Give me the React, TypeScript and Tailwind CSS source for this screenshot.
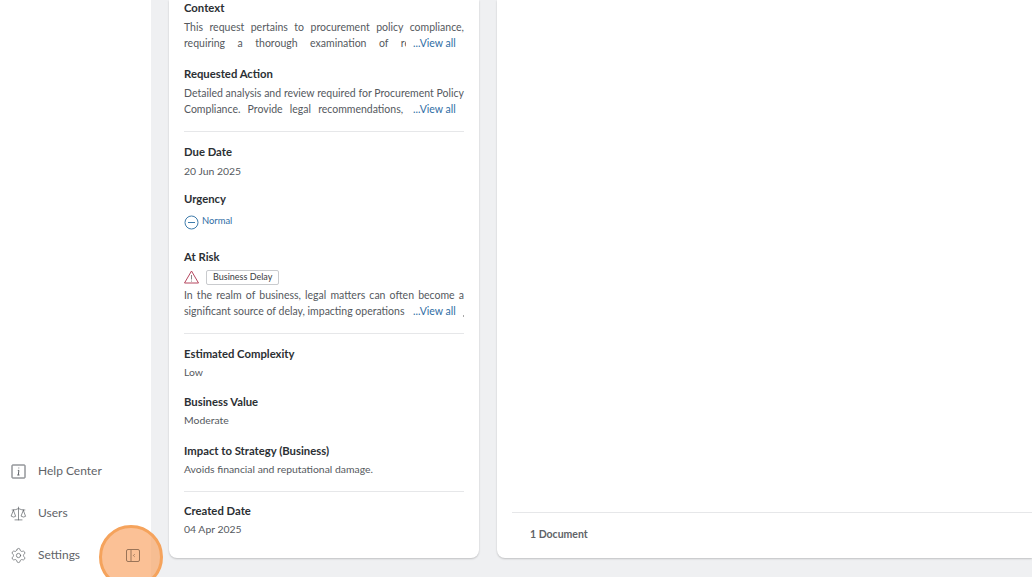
import { Settings, Scale } from "lucide-react";

const lato = "font-['Lato','Open_Sans',sans-serif]";

function Heading({ children }: { children: string }) {
  return <div className="text-[11.3px] leading-[16px] font-bold text-[#2b2f33]">{children}</div>;
}

function Value({ children }: { children: string }) {
  return <div className="text-[10.4px] leading-[16px] text-[#55595e]">{children}</div>;
}

function Clamped({ first, second, peek }: { first: string; second: string; peek?: boolean }) {
  return (
    <div className="text-[10.5px] leading-[16px] text-[#55595e]">
      <div className="[text-align-last:justify]">{first}</div>
      <div className="flex">
        {/* second line keeps its full justified width but is cut before the link */}
        <div className="w-[222px] shrink-0 overflow-hidden">
          <div className="w-[280px] whitespace-nowrap [text-align-last:justify]">{second}</div>
        </div>
        <span className="ml-[7px] text-[#2f6ea5]">...View all</span>
        {peek ? <span className="ml-auto mt-[12px] h-[2px] w-px bg-[#a9a9a9]" /> : null}
      </div>
    </div>
  );
}

function Divider() {
  return <div className="h-px bg-[#e6e7e9]" />;
}

function NavItem({ icon, label }: { icon: React.ReactNode; label: string }) {
  return (
    <div className="flex h-[42px] items-center gap-[11px] pl-[10px] text-[12px] text-[#5f6368]">
      <div className="flex w-[17px] justify-center">{icon}</div>
      <span>{label}</span>
    </div>
  );
}

export default function App() {
  return (
    <div className={`${lato} flex h-[577px] w-[1032px] overflow-hidden bg-[#eff0f2]`}>
      {/* sidebar */}
      <aside className="relative flex h-full w-[151px] shrink-0 flex-col justify-end bg-white pb-[1px]">
        <NavItem
          label="Help Center"
          icon={
            <svg width="15" height="15" viewBox="0 0 15 15" fill="none" stroke="#5f6368" strokeWidth="1">
              <rect x="1" y="1" width="13" height="13" rx="0.5" />
              <path d="M7.8 3.6v.8M6.8 6.4h1.1l-.6 4.6M6.3 11h2.2" />
            </svg>
          }
        />
        <NavItem label="Users" icon={<Scale size={17} strokeWidth={1} color="#5f6368" />} />
        <NavItem label="Settings" icon={<Settings size={17} strokeWidth={1} color="#5f6368" />} />

        {/* collapse highlight */}
        <div className="absolute left-[99px] top-[525px] z-10 flex h-[64px] w-[64px] items-center justify-center rounded-full border-[3px] border-[#f5a35c] bg-[#f9a76a]/70">
          <svg width="14" height="13" viewBox="0 0 14 13" fill="none" stroke="#9a7458" strokeWidth="1" className="-mt-[4px] ml-[4px]">
            <rect x="0.5" y="0.5" width="13" height="12" rx="1.5" />
            <path d="M5 0.5v12M8.6 5.3 7.4 6.5l1.2 1.2" />
          </svg>
        </div>
      </aside>

      {/* content */}
      <main className="flex h-full min-w-0 flex-1 gap-[18px] pb-[19px] pl-[18px]">
        {/* details card */}
        <section className="flex h-full w-[310px] shrink-0 flex-col rounded-b-[8px] bg-white px-[15px] shadow-[0_1px_2px_rgba(0,0,0,0.2)]">
          <Heading>Context</Heading>
          <div className="mt-[3px]">
            <Clamped
              first="This request pertains to procurement policy compliance,"
              second="requiring a thorough examination of requirements,"
            />
          </div>
          <div className="mt-[15px]">
            <Heading>Requested Action</Heading>
          </div>
          <div className="mt-[3px]">
            <Clamped
              first="Detailed analysis and review required for Procurement Policy"
              second="Compliance. Provide legal recommendations, highlighting"
            />
          </div>
          <div className="mt-[14px]">
            <Divider />
          </div>
          <div className="mt-[12px]">
            <Heading>Due Date</Heading>
          </div>
          <div className="mt-[3px]">
            <Value>20 Jun 2025</Value>
          </div>
          <div className="mt-[12px]">
            <Heading>Urgency</Heading>
          </div>
          <div className="mt-[6px] flex h-[16px] items-center gap-[3px]">
            <svg width="15" height="15" viewBox="0 0 15 15" fill="none" stroke="#3f7cab" strokeWidth="1" className="mt-[2px]">
              <circle cx="7.5" cy="7.5" r="6.5" />
              <path d="M4 7.5h7" />
            </svg>
            <span className="text-[9.4px] text-[#2f6ea5]">Normal</span>
          </div>
          <div className="mt-[20px]">
            <Heading>At Risk</Heading>
          </div>
          <div className="mt-[4px] flex h-[16px] items-center gap-[7px]">
            <svg width="15" height="14" viewBox="0 0 15 14" fill="none" stroke="#b5475f" strokeWidth="1" strokeLinejoin="round">
              <path d="M7.5 1 14.5 13h-14z" />
              <path d="M7.5 5v4.5M7.5 10.6v1" stroke="#888" />
            </svg>
            <span className="flex h-[15px] items-center rounded-[2px] border border-[#c9cbce] px-[6px] text-[9px] text-[#3a3e43]">
              Business Delay
            </span>
          </div>
          <div className="mt-[2px]">
            <Clamped
              first="In the realm of business, legal matters can often become a"
              second="significant source of delay, impacting operations productivity,"
              peek
            />
          </div>
          <div className="mt-[14px]">
            <Divider />
          </div>
          <div className="mt-[12px]">
            <Heading>Estimated Complexity</Heading>
          </div>
          <div className="mt-[2px]">
            <Value>Low</Value>
          </div>
          <div className="mt-[14px]">
            <Heading>Business Value</Heading>
          </div>
          <div className="mt-[2px]">
            <Value>Moderate</Value>
          </div>
          <div className="mt-[15px]">
            <Heading>Impact to Strategy (Business)</Heading>
          </div>
          <div className="mt-[2px]">
            <Value>Avoids financial and reputational damage.</Value>
          </div>
          <div className="mt-[14px]">
            <Divider />
          </div>
          <div className="mt-[11px]">
            <Heading>Created Date</Heading>
          </div>
          <div className="mt-[2px]">
            <Value>04 Apr 2025</Value>
          </div>
        </section>

        {/* document panel */}
        <section className="flex h-full min-w-0 flex-1 flex-col justify-end rounded-bl-[8px] bg-white pl-[15px] shadow-[0_1px_2px_rgba(0,0,0,0.2)]">
          <div className="flex h-[46px] items-center border-t border-[#e6e7e9] pb-[1px] pl-[18px] text-[10.5px] font-bold text-[#5f6368]">
            1 Document
          </div>
        </section>
      </main>
    </div>
  );
}
